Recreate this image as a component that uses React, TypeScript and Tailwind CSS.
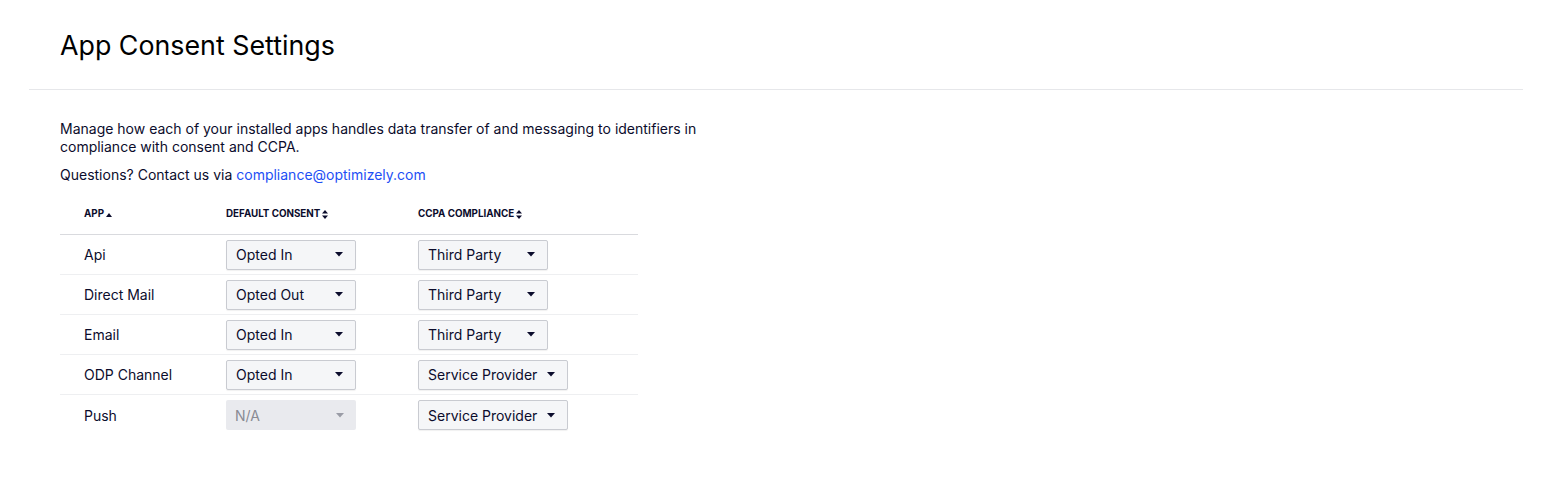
import React from "react";

type Row = { app: string; consent: string; ccpa: string; disabled?: boolean };

const rows: Row[] = [
  { app: "Api", consent: "Opted In", ccpa: "Third Party" },
  { app: "Direct Mail", consent: "Opted Out", ccpa: "Third Party" },
  { app: "Email", consent: "Opted In", ccpa: "Third Party" },
  { app: "ODP Channel", consent: "Opted In", ccpa: "Service Provider" },
  { app: "Push", consent: "N/A", ccpa: "Service Provider", disabled: true },
];

function Caret({ muted }: { muted?: boolean }) {
  return (
    <svg width="8" height="5" viewBox="0 0 8 5" className={muted ? "text-[#9a9ca6]" : "text-[#0b0c2c]"}>
      <path d="M0 0h8L4 4.5z" fill="currentColor" />
    </svg>
  );
}

function SortBoth() {
  return (
    <svg width="6" height="9" viewBox="0 0 6 9" className="ml-[2px] text-[#0b0c2c]">
      <path d="M0 3.6h6L3 0z M0 5.4h6L3 9z" fill="currentColor" />
    </svg>
  );
}

function SortUp() {
  return (
    <svg width="6" height="4" viewBox="0 0 6 4" className="ml-[2px] text-[#0b0c2c]">
      <path d="M0 4h6L3 0z" fill="currentColor" />
    </svg>
  );
}

function Select({ value, wide, disabled }: { value: string; wide?: boolean; disabled?: boolean }) {
  return (
    <div
      className={`flex h-[30px] items-center justify-between rounded-[2px] pl-[9px] pr-[12px] ${
        wide ? "w-[150px]" : "w-[130px]"
      } ${
        disabled
          ? "bg-[#e9eaee] text-[#8a8b94]"
          : "border border-[#c9cbd1] bg-[#f5f6f8] text-[#0b0c2c] shadow-[0_1px_1px_rgba(0,0,0,0.06)]"
      }`}
    >
      <span className="text-[14px]">{value}</span>
      <Caret muted={disabled} />
    </div>
  );
}

export default function App() {
  return (
    <div className="min-h-screen w-full bg-white font-['Inter',sans-serif] text-[#0b0c2c]">
      <div className="mx-[29px]">
        <div className="border-b border-[#e6e7ea] pl-[31px] pt-[28px] pb-[27px]">
          <h1 className="text-[26.8px] leading-[34px] font-normal text-black">App Consent Settings</h1>
        </div>

        <div className="pl-[31px] pt-[30px]">
          <p className="max-w-[680px] text-[14px] leading-[18px]">
            Manage how each of your installed apps handles data transfer of and messaging to identifiers in
            compliance with consent and CCPA.
          </p>
          <p className="mt-[10px] text-[14px] leading-[18px]">
            Questions? Contact us via{" "}
            <a href="#" className="text-[#1d4ff5]">
              compliance@optimizely.com
            </a>
          </p>

          <div className="mt-[11px] w-[578px]">
            <div className="flex h-[40px] items-center border-b border-[#d9dade] text-[9.8px] font-bold uppercase">
              <div className="flex w-[166px] items-center pl-[24px]">
                App
                <SortUp />
              </div>
              <div className="flex w-[192px] items-center">
                Default Consent
                <SortBoth />
              </div>
              <div className="flex items-center">
                CCPA Compliance
                <SortBoth />
              </div>
            </div>

            {rows.map((r, i) => (
              <div
                key={r.app}
                className={`flex h-[40px] items-center ${i < rows.length - 1 ? "border-b border-[#eeeff1]" : ""}`}
              >
                <div className="w-[166px] pl-[24px] text-[14px]">{r.app}</div>
                <div className="w-[192px]">
                  <Select value={r.consent} disabled={r.disabled} />
                </div>
                <div>
                  <Select value={r.ccpa} wide={r.ccpa === "Service Provider"} />
                </div>
              </div>
            ))}
          </div>
        </div>
      </div>
    </div>
  );
}
